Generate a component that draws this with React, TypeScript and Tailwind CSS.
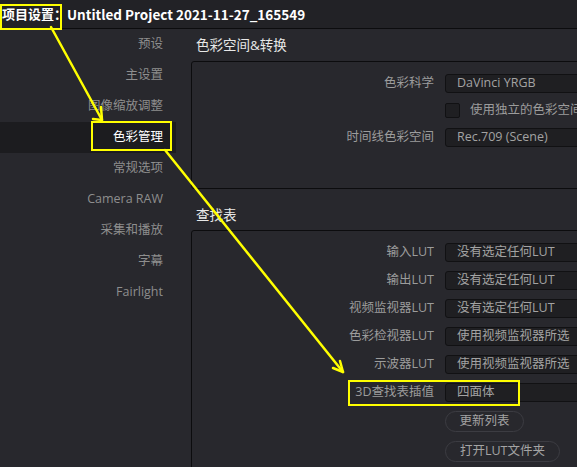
import React from 'react';

const NAV = ['预设', '主设置', '图像缩放调整', '色彩管理', '常规选项', 'Camera RAW', '采集和播放', '字幕', 'Fairlight'];

const LUT_ROWS = [
    { label: '输入LUT', value: '没有选定任何LUT' },
    { label: '输出LUT', value: '没有选定任何LUT' },
    { label: '视频监视器LUT', value: '没有选定任何LUT' },
    { label: '色彩检视器LUT', value: '使用视频监视器所选' },
    { label: '示波器LUT', value: '使用视频监视器所选' },
    { label: '3D查找表插值', value: '四面体' },
];

const Dropdown: React.FC<{ value: string }> = ({ value }) => (
    <div className="h-[19px] w-[300px] flex items-center pl-[11px] bg-[#1f1f22] border border-[#111113] rounded-[3px] text-[#a3a3a3] text-[12.5px] leading-none">
        {value}
    </div>
);

const Row: React.FC<{ label: string; children: React.ReactNode }> = ({ label, children }) => (
    <div className="flex items-center h-[19px]">
        <div className="w-[253px] shrink-0 pr-[11px] text-right text-[#9c9c9c] text-[12.5px] leading-none">{label}</div>
        {children}
    </div>
);

const App: React.FC = () => {
    return (
        <div className="relative w-[577px] h-[467px] overflow-hidden bg-[#28282d] font-['Open_Sans','Noto_Sans_CJK_SC',sans-serif]">
            {/* title bar */}
            <div className="h-[29px] flex items-center pl-[2px] bg-[#222226] border-b border-[#0c0c0e] text-white text-[13px] font-bold font-['Noto_Sans_CJK_SC',sans-serif]">
                <span>项目设置：</span>
                <span className="text-[13.5px]">Untitled Project 2021-11-27_165549</span>
            </div>

            <div className="flex">
                {/* sidebar */}
                <div className="w-[176px] shrink-0 flex flex-col">
                    {NAV.map(item => (
                        <div
                            key={item}
                            className={`h-[31px] flex items-center justify-end pr-[13px] text-[12.5px] ${
                                item === '色彩管理' ? 'bg-[#1c1c1f] text-white' : 'text-[#8e8e8e]'
                            }`}
                        >
                            {item}
                        </div>
                    ))}
                </div>

                {/* main */}
                <div className="flex-1 pl-[15px] overflow-hidden">
                    <div className="h-[32px] flex items-center pl-[5px] text-[#e8e8e8] text-[13.5px]">色彩空间&amp;转换</div>
                    <div className="w-[600px] h-[128px] border border-[#0c0c0e] rounded-[3px] pt-[12px] flex flex-col gap-[8px]">
                        <Row label="色彩科学">
                            <Dropdown value="DaVinci YRGB" />
                        </Row>
                        <Row label="">
                            <div className="flex items-center">
                                <div className="w-[15px] h-[15px] bg-[#1f1f22] border border-[#111113] rounded-[2px]" />
                                <span className="ml-[10px] text-[#9c9c9c] text-[12.5px] whitespace-nowrap">使用独立的色彩空间和Gamma</span>
                            </div>
                        </Row>
                        <Row label="时间线色彩空间">
                            <Dropdown value="Rec.709 (Scene)" />
                        </Row>
                    </div>

                    <div className="h-[41px] flex items-end pb-[5px] pl-[5px] text-[#e8e8e8] text-[13.5px]">查找表</div>
                    <div className="w-[600px] h-[260px] border border-[#0c0c0e] rounded-[3px] pt-[12px] flex flex-col gap-[9px]">
                        {LUT_ROWS.map(r => (
                            <Row key={r.label} label={r.label}>
                                <Dropdown value={r.value} />
                            </Row>
                        ))}
                        <div className="pl-[253px] flex flex-col items-start gap-[9px]">
                            <button className="h-[21px] w-[79px] rounded-full border border-[#3c3c42] text-[#a3a3a3] text-[12.5px] leading-none">更新列表</button>
                            <button className="h-[21px] w-[115px] rounded-full border border-[#3c3c42] text-[#a3a3a3] text-[12.5px] leading-none">打开LUT文件夹</button>
                        </div>
                    </div>
                </div>
            </div>

            {/* annotations */}
            <div className="absolute left-0 top-[4px] w-[62px] h-[26px] border-2 border-[#ffff00]" />
            <div className="absolute left-[91px] top-[121px] w-[81px] h-[30px] border-2 border-[#ffff00]" />
            <div className="absolute left-[348px] top-[380px] w-[172px] h-[26px] border-2 border-[#ffff00]" />
            <svg className="absolute inset-0 pointer-events-none" width="577" height="467">
                <g stroke="#ffff00" strokeWidth="2.5" fill="none" strokeLinecap="round" strokeLinejoin="round">
                    <line x1="51" y1="27" x2="102" y2="120" />
                    <polyline points="101,107 102,120 93,119" />
                    <line x1="165" y1="150" x2="343" y2="372" />
                    <polyline points="340,361 343,372 333,368" />
                </g>
            </svg>
        </div>
    );
};

export default App;
